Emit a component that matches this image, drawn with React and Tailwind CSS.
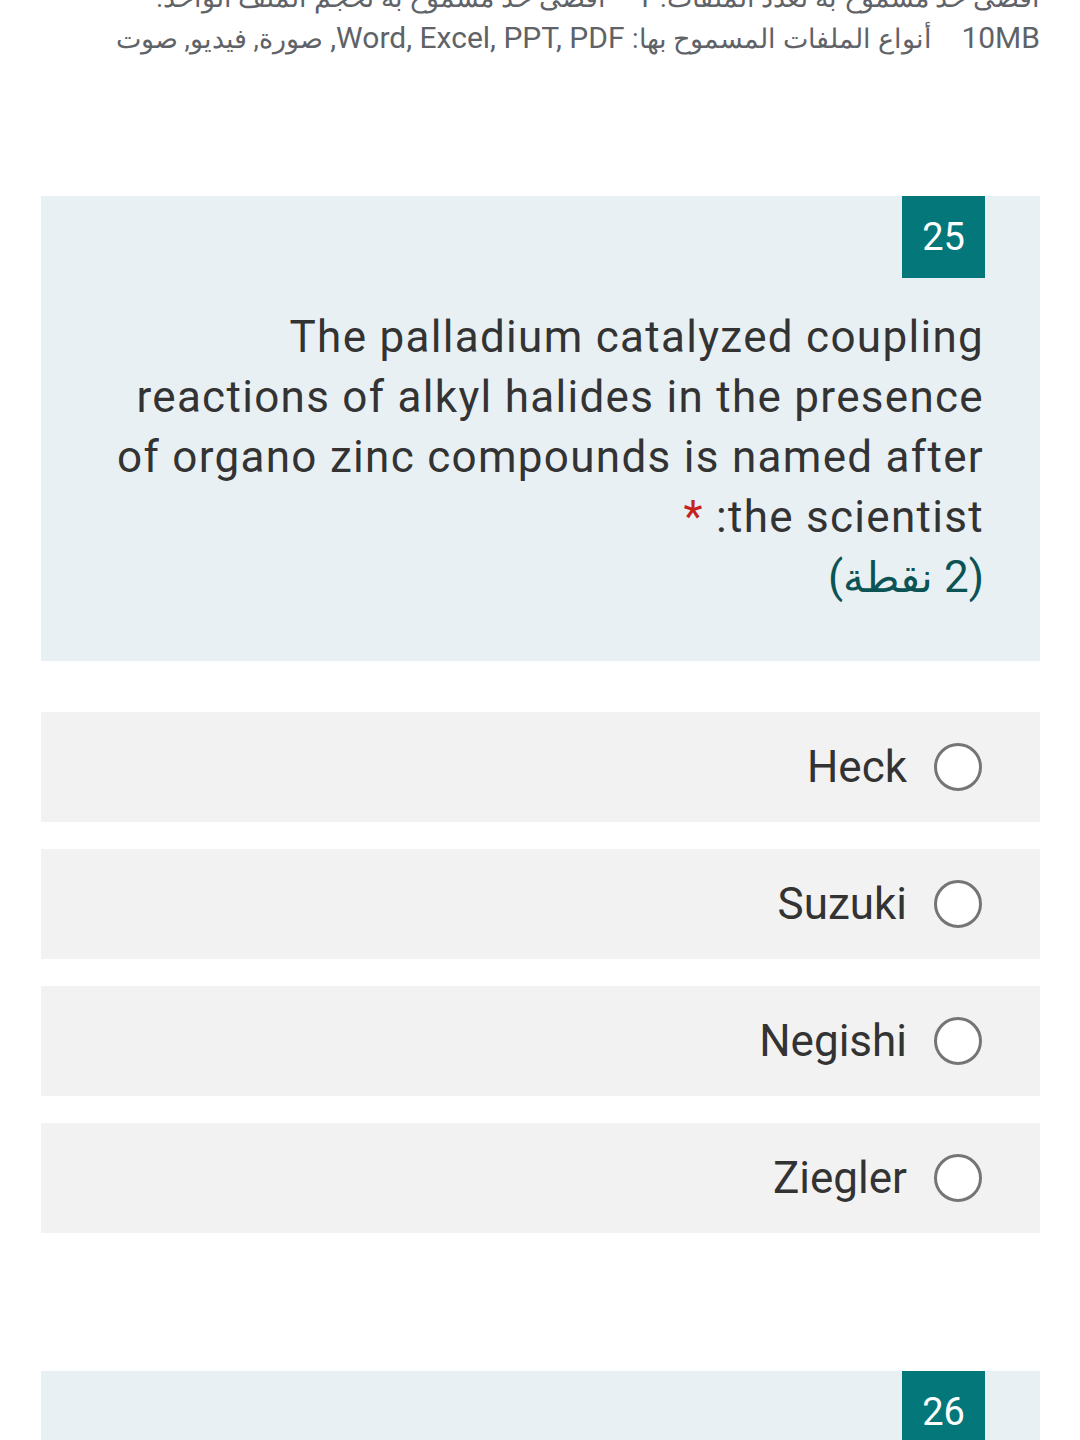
import React from 'react';

const OPTIONS = ['Heck', 'Suzuki', 'Negishi', 'Ziegler'];

const Badge = ({ n }) => (
  <div className="flex justify-end pr-[55px]">
    <div className="w-[83px] h-[82px] bg-[#04777a] text-white text-[38px] flex items-center justify-center">
      {n}
    </div>
  </div>
);

const Option = ({ label }) => (
  <div className="h-[110px] bg-[#f2f2f2] flex items-center justify-end pr-[58px] gap-[27px]">
    <span className="text-[44px] text-[#333333]">{label}</span>
    <span className="w-[48px] h-[48px] rounded-full border-[3px] border-[#757575] bg-white" />
  </div>
);

const Ar = ({ children }) => <span className="text-[27px]">{children}</span>;

export default function App() {
  return (
    <div className="bg-white min-h-[1440px] overflow-hidden" style={{ fontFamily: 'Roboto, "Noto Sans", sans-serif' }}>
      <div dir="rtl" className="mt-[-23px] pr-[40px] pl-[40px] text-[30px] leading-[40px] text-[#5f6368] whitespace-nowrap">
        <p>
          <Ar>أقصى حد مسموح به لعدد الملفات:</Ar> 1&nbsp;&nbsp;&nbsp; <Ar>أقصى حد مسموح به لحجم الملف الواحد:</Ar>
        </p>
        <p>
          10MB&nbsp;&nbsp;&nbsp; <Ar>أنواع الملفات المسموح بها:</Ar> Word, Excel, PPT, PDF, <Ar>صورة, فيديو, صوت</Ar>
        </p>
      </div>

      <div className="ml-[41px] mr-[40px] mt-[137px]">
        <section className="bg-[#e8f0f3] pb-[53px]">
          <Badge n="25" />
          <div dir="rtl" className="pr-[56px] pl-[30px] pt-[29px] text-[44px] leading-[60px] tracking-[1.3px] text-[#333333]">
            <p>
              The palladium catalyzed coupling
              <br />
              reactions of alkyl halides in the presence
              <br />
              of organo zinc compounds is named after
              <br />
              the scientist: <span className="text-[#c5221f]">*</span>
            </p>
            <p className="text-[#0b5354] tracking-normal">
              (2 <span className="text-[42px]">نقطة</span>)
            </p>
          </div>
        </section>

        <div className="mt-[51px] flex flex-col gap-[27px]">
          {OPTIONS.map((o) => (
            <Option key={o} label={o} />
          ))}
        </div>

        <section className="bg-[#e8f0f3] mt-[138px] h-[200px]">
          <Badge n="26" />
        </section>
      </div>
    </div>
  );
}
